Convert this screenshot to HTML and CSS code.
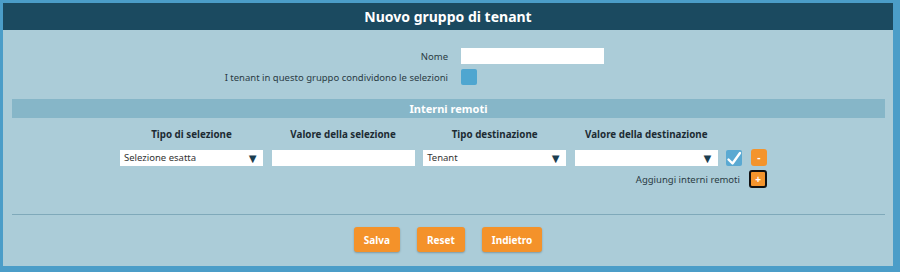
FILE: index.html
```html
<!DOCTYPE html>
<html lang="it">
<head>
    <meta charset="UTF-8">
    <title>Nuovo gruppo di tenant</title>
    <link rel="stylesheet" href="styles.css">
</head>
<body>
    <div class="panel">
        <div class="titolo">Nuovo gruppo di tenant</div>
        <div class="campi">
            <label class="etichetta">Nome</label>
            <input class="testo nome" type="text" value="">
            <label class="etichetta">I tenant in questo gruppo condividono le selezioni</label>
            <span class="check vuoto"></span>
        </div>
        <div class="sezione">Interni remoti</div>
        <div class="righe">
            <div class="intest">Tipo di selezione</div>
            <div class="intest">Valore della selezione</div>
            <div class="intest">Tipo destinazione</div>
            <div class="intest">Valore della destinazione</div>
            <div></div>
            <div></div>

            <div class="sel">Selezione esatta<span class="freccia">&#9660;</span></div>
            <input class="testo" type="text" value="">
            <div class="sel">Tenant<span class="freccia">&#9660;</span></div>
            <div class="sel"><span class="freccia">&#9660;</span></div>
            <span class="check pieno">
                <svg width="16" height="16" viewBox="0 0 16 16"><path d="M2.5 8.5 L6.5 12.5 L14 2" fill="none" stroke="#fff" stroke-width="2.4" stroke-linecap="round" stroke-linejoin="round"/></svg>
            </span>
            <button class="mini">-</button>
        </div>
        <div class="aggiungi">
            <span>Aggiungi interni remoti</span>
            <button class="mini piu">+</button>
        </div>
        <div class="linea"></div>
        <div class="bottoni">
            <button class="btn">Salva</button>
            <button class="btn">Reset</button>
            <button class="btn">Indietro</button>
        </div>
    </div>
</body>
</html>
```

FILE: styles.css
```css
html, body {
    margin: 0;
    height: 100%;
}

body {
    background: #4b9dc8;
    font-family: "Noto Sans", "Open Sans", sans-serif;
    color: #1d3540;
    padding: 3px 7px 0 3px;
    box-sizing: border-box;
}

.panel {
    background: #abccd8;
    height: 263px;
    box-sizing: border-box;
}

.titolo {
    background: #1b4a60;
    color: #fff;
    font-weight: bold;
    font-size: 14px;
    text-align: center;
    height: 27px;
    line-height: 27px;
}

.campi {
    display: grid;
    grid-template-columns: 445px 1fr;
    column-gap: 13px;
    row-gap: 5px;
    align-items: center;
    padding-top: 18px;
}

.etichetta {
    text-align: right;
    font-size: 9.5px;
    color: #2a3b44;
}

.testo {
    border: 0;
    background: #fff;
    height: 16px;
    padding: 0;
    box-sizing: border-box;
    font-size: 10px;
}

.nome {
    width: 143px;
}

.check {
    display: block;
    width: 16px;
    height: 16px;
    border-radius: 2px;
    background: #4fa6d0;
}

.sezione {
    margin: 14px 8px 0 9px;
    background: #86b6c8;
    color: #fff;
    font-weight: bold;
    font-size: 11px;
    text-align: center;
    height: 19px;
    line-height: 19px;
}

.righe {
    display: grid;
    grid-template-columns: 143px 143px 143px 143px 16px 16px;
    column-gap: 8.6px;
    row-gap: 8px;
    align-items: center;
    padding-left: 117px;
    padding-top: 10px;
}

.intest {
    text-align: center;
    font-weight: bold;
    font-size: 9.8px;
    color: #1d2b33;
}

.righe .testo {
    width: 143px;
}

.sel {
    background: #fff;
    height: 16px;
    font-size: 9.5px;
    line-height: 16px;
    padding-left: 4px;
    position: relative;
    color: #333;
}

.freccia {
    position: absolute;
    right: 4px;
    top: 0;
    font-size: 13px;
    line-height: 16px;
    color: #1b3e50;
}

.check.pieno {
    background: #5aa9d2;
}

.mini {
    width: 16px;
    height: 17px;
    padding: 0;
    border: 0;
    border-radius: 3px;
    background: #f4942c;
    color: #fff;
    font-size: 10px;
    font-weight: bold;
    font-family: inherit;
    line-height: 17px;
}

.aggiungi {
    display: flex;
    justify-content: flex-end;
    align-items: center;
    column-gap: 9px;
    padding-right: 126px;
    padding-top: 4px;
    font-size: 9.5px;
    color: #2a3b44;
}

.mini.piu {
    border: 2px solid #111;
    width: 18px;
    height: 18px;
    line-height: 14px;
}

.linea {
    margin: 26px 8px 0 9px;
    border-top: 1px solid #7fa9ba;
}

.bottoni {
    display: flex;
    justify-content: center;
    column-gap: 17px;
    padding-top: 12px;
    padding-left: 0;
}

.btn {
    background: #f4922a;
    color: #fff;
    border: 0;
    border-radius: 3px;
    font-family: inherit;
    font-size: 10px;
    font-weight: bold;
    height: 25px;
    padding: 0 10px;
    box-shadow: 0 1px 2px rgba(0, 0, 0, 0.25);
}
```
